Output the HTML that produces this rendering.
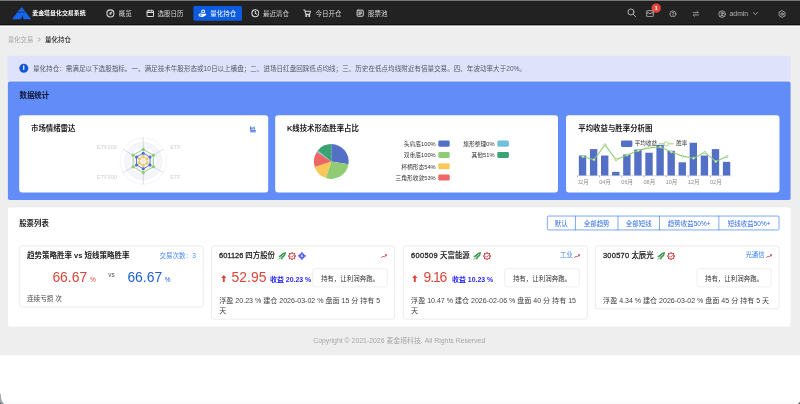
<!DOCTYPE html>
<html lang="zh-CN"><head><meta charset="utf-8"><title>麦金塔量化交易系统</title>
<style>
html,body{margin:0;padding:0;background:#fff;}
body{width:800px;height:404px;overflow:hidden;position:relative;font-family:"Liberation Sans","Noto Sans CJK SC",sans-serif;will-change:transform;}
.t{position:absolute;white-space:nowrap;margin:0;}
.b{position:absolute;display:block;}
</style></head><body>
<svg class="b" style="left:0;top:0" width="800" height="404" viewBox="0 0 800 404"><rect x="0.00" y="0.00" width="800.00" height="404.00" rx="0" fill="#ffffff"/><rect x="0.00" y="0.00" width="800.00" height="355.40" rx="0" fill="#eeeeee"/><rect x="0.00" y="0.00" width="800.00" height="25.60" rx="0" fill="#0b0b0b"/><rect x="0.00" y="0.00" width="800.00" height="24.30" rx="0" fill="#222222"/><rect x="0.00" y="0.00" width="800.00" height="2.00" rx="0" fill="#151515"/><rect x="0.00" y="0.00" width="800.00" height="1.10" rx="0" fill="#777777"/><rect x="0.00" y="25.60" width="800.00" height="1.70" rx="0" fill="#f9f9f9"/><rect x="193.40" y="6.00" width="48.60" height="14.70" rx="1.5" fill="#0d5cdf"/><circle cx="656.2" cy="8.1" r="4.7" fill="#e8443a"/><rect x="7.50" y="55.80" width="783.20" height="24.70" rx="1.8" fill="#dee3fb"/><circle cx="23.800" cy="68.300" r="4.500" fill="#1456d8"/><rect x="7.90" y="81.60" width="782.70" height="118.40" rx="1.8" fill="#628df9"/><rect x="19.20" y="115.30" width="249.00" height="77.10" rx="3" fill="#fff"/><rect x="275.20" y="115.30" width="282.80" height="77.10" rx="3" fill="#fff"/><rect x="566.00" y="115.30" width="213.50" height="77.10" rx="3" fill="#fff"/><rect x="7.90" y="207.50" width="782.70" height="118.90" rx="1.8" fill="#fff"/><rect x="547.35" y="216.05" width="231.70" height="13.90" rx="1.25" fill="#fff" stroke="#4583f5" stroke-width="0.7"/><rect x="574.95" y="215.70" width="0.70" height="14.60" rx="0" fill="#4583f5"/><rect x="617.65" y="215.70" width="0.70" height="14.60" rx="0" fill="#4583f5"/><rect x="659.05" y="215.70" width="0.70" height="14.60" rx="0" fill="#4583f5"/><rect x="718.55" y="215.70" width="0.70" height="14.60" rx="0" fill="#4583f5"/><rect x="19.75" y="245.95" width="183.40" height="61.00" rx="2.25" fill="#fff" stroke="#dfe2e8" stroke-width="0.7"/><rect x="211.55" y="245.95" width="183.10" height="73.20" rx="2.25" fill="#fff" stroke="#dfe2e8" stroke-width="0.7"/><rect x="312.80" y="268.70" width="74.40" height="18.20" rx="2.30" fill="#fff" stroke="#e2e2e2" stroke-width="0.6"/><rect x="403.35" y="245.95" width="183.90" height="73.20" rx="2.25" fill="#fff" stroke="#dfe2e8" stroke-width="0.7"/><rect x="504.80" y="268.70" width="74.40" height="18.20" rx="2.30" fill="#fff" stroke="#e2e2e2" stroke-width="0.6"/><rect x="595.35" y="245.95" width="183.70" height="62.90" rx="2.25" fill="#fff" stroke="#dfe2e8" stroke-width="0.7"/><rect x="697.10" y="268.70" width="73.90" height="18.20" rx="2.30" fill="#fff" stroke="#e2e2e2" stroke-width="0.6"/><path d="M0 393L0.800 394.500Q1 401.500 4.300 404H0Z" fill="#808484" fill-opacity="0.700"/><path d="M0 401.500Q0.200 403.700 1.300 404H0Z" fill="#0e3a3a" fill-opacity="0.900"/><defs><linearGradient id="bg" x1="0" y1="0" x2="0" y2="1"><stop offset="0" stop-color="#000" stop-opacity="0"/><stop offset="1" stop-color="#000" stop-opacity="0.022"/></linearGradient></defs><rect x="0" y="400" width="800" height="4" fill="url(#bg)"/><path d="M800 401.500Q799.600 403.800 797.800 404H800Z" fill="#101010" fill-opacity="0.850"/></svg>
<svg class="b" style="left:0;top:0" width="800" height="26" viewBox="0 0 800 26"><path d="M21.6 7.1 L31.3 19.2 L23.6 19.2 L22.4 15 L21 19.2 L12 19.2 Z" fill="#1766f2"/><path d="M18.4 12.6 Q21.6 11 24.6 12.6" stroke="#222" stroke-width="0.7" fill="none"/></svg>
<div class="t" style="left:32.2px;top:9.04px;font-size:5.95px;line-height:8.33px;color:#ffffff;font-weight:700;">麦金塔量化交易系统</div>
<div class="t" style="left:118.7px;top:8.87px;font-size:6.48px;line-height:9.07px;color:#d9d9d9;font-weight:400;">概览</div>
<svg class="b" style="left:106.40px;top:8.90px" width="8.8" height="8.8" viewBox="0 0 16 16" fill="none" stroke="#d9d9d9" stroke-width="1.900" stroke-linecap="round" stroke-linejoin="round"><circle cx="8" cy="8" r="6.4"/><path d="M8 8 L11 5"/><circle cx="8" cy="8.5" r="1"/></svg>
<div class="t" style="left:157.6px;top:8.87px;font-size:6.48px;line-height:9.07px;color:#d9d9d9;font-weight:400;">选股日历</div>
<svg class="b" style="left:146.00px;top:9.00px" width="8.6" height="8.6" viewBox="0 0 16 16" fill="none" stroke="#d9d9d9" stroke-width="1.900" stroke-linecap="round" stroke-linejoin="round"><rect x="2" y="3.2" width="12" height="10.8" rx="1.5"/><path d="M2 6.5H14M5.3 1.6V4M10.7 1.6V4"/></svg>
<div class="t" style="left:210.3px;top:8.87px;font-size:6.48px;line-height:9.07px;color:#ffffff;font-weight:400;">量化持仓</div>
<svg class="b" style="left:198.30px;top:9.10px" width="8.6" height="8.6" viewBox="0 0 16 16" fill="none" stroke="#fff" stroke-width="1.900" stroke-linecap="round" stroke-linejoin="round"><path d="M2 11c0-2 3-2 5-1.4l3 .8c1.2.4.8 1.8-.4 1.6L7 11.6"/><path d="M9.8 11.2l3.4-1.6c1-.4 1.8.8.8 1.4l-4.6 2.8c-1 .5-2 .4-3-.1L2 12.4"/><circle cx="9.5" cy="4.8" r="2.8"/></svg>
<div class="t" style="left:263.1px;top:8.87px;font-size:6.48px;line-height:9.07px;color:#d9d9d9;font-weight:400;">最近清仓</div>
<svg class="b" style="left:250.80px;top:9.00px" width="8.6" height="8.6" viewBox="0 0 16 16" fill="none" stroke="#d9d9d9" stroke-width="1.900" stroke-linecap="round" stroke-linejoin="round"><circle cx="8" cy="8" r="6.4"/><path d="M8 4.4V8l2.4 1.6"/></svg>
<div class="t" style="left:315.6px;top:8.87px;font-size:6.48px;line-height:9.07px;color:#d9d9d9;font-weight:400;">今日开仓</div>
<svg class="b" style="left:303.20px;top:9.10px" width="8.6" height="8.6" viewBox="0 0 16 16" fill="none" stroke="#d9d9d9" stroke-width="1.900" stroke-linecap="round" stroke-linejoin="round"><path d="M1.4 2h2l1.8 8h7.2l1.4-5.6H5"/><circle cx="6" cy="13" r="1.1"/><circle cx="11.6" cy="13" r="1.1"/></svg>
<div class="t" style="left:368.1px;top:8.87px;font-size:6.48px;line-height:9.07px;color:#d9d9d9;font-weight:400;">股票池</div>
<svg class="b" style="left:356.05px;top:9.20px" width="8.4" height="8.4" viewBox="0 0 16 16" fill="none" stroke="#d9d9d9" stroke-width="1.900" stroke-linecap="round" stroke-linejoin="round"><rect x="2.2" y="2.2" width="11.6" height="11.6" rx="1.5"/><path d="M5.4 5.8h5.2M5.4 8h5.2M5.4 10.2h3"/></svg>
<svg class="b" style="left:627.00px;top:8.30px" width="9.6" height="9.6" viewBox="0 0 16 16" fill="none" stroke="#c2c2c2" stroke-width="1.5" stroke-linecap="round" stroke-linejoin="round"><circle cx="6.600" cy="6.600" r="5"/><path d="M10.600 10.600L14.600 14.600"/></svg>
<svg class="b" style="left:646.4px;top:10px" width="8" height="7.4" viewBox="0 0 8 7.4" fill="none" stroke="#d9d9d9" stroke-width="0.75" stroke-linejoin="round"><rect x="0.7" y="0.7" width="6.6" height="6" rx="0.6"/><path d="M0.9 2.9h1.6l1.5 1 1.5-1h1.6"/></svg>
<div class="t" style="left:556.2px;width:200px;text-align:center;top:4.14px;font-size:5.8px;line-height:8.12px;color:#fff;font-weight:700;">1</div>
<svg class="b" style="left:669.10px;top:9.70px" width="7.8" height="7.8" viewBox="0 0 16 16" fill="none" stroke="#c2c2c2" stroke-width="1.5" stroke-linecap="round" stroke-linejoin="round"><circle cx="8" cy="8" r="6.2"/><path d="M6.2 6.4c0-2.4 3.8-2.4 3.6 0 0 1.2-1.8 1.4-1.8 2.8M8 11.6v.2"/></svg>
<svg class="b" style="left:691.70px;top:9.80px" width="7.6" height="7.6" viewBox="0 0 16 16" fill="none" stroke="#c2c2c2" stroke-width="1.5" stroke-linecap="round" stroke-linejoin="round"><path d="M2.4 5.6h11.2L10.6 2.8M13.6 10.4H2.4l3 2.8"/></svg>
<svg class="b" style="left:717.70px;top:9.50px" width="8.2" height="8.2" viewBox="0 0 16 16" fill="none" stroke="#c2c2c2" stroke-width="1.5" stroke-linecap="round" stroke-linejoin="round"><circle cx="8" cy="8" r="6.4"/><circle cx="8" cy="6.6" r="2.2"/><path d="M3.8 12.6c1.4-3 7-3 8.4 0"/></svg>
<div class="t" style="left:729.6px;top:8.74px;font-size:6.8px;line-height:9.52px;color:#b4b4b4;font-weight:400;">admin</div>
<svg class="b" style="left:752.00px;top:10.20px" width="7" height="7" viewBox="0 0 16 16" fill="none" stroke="#c2c2c2" stroke-width="1.8" stroke-linecap="round" stroke-linejoin="round"><path d="M3.400 6l4.600 4.400 4.600-4.400"/></svg>
<svg class="b" style="left:777.70px;top:9.50px" width="8.2" height="8.2" viewBox="0 0 16 16" fill="none" stroke="#c2c2c2" stroke-width="1.5" stroke-linecap="round" stroke-linejoin="round"><path d="M8 1.4l5.7 3.3v6.6L8 14.6 2.3 11.3V4.7z"/><circle cx="8" cy="8" r="2.4"/></svg>
<div class="t" style="left:8px;top:35.79px;font-size:6.3px;line-height:8.82px;color:#a6a6a6;font-weight:400;">量化交易</div>
<svg class="b" style="left:37.4px;top:37.2px" width="4" height="5" viewBox="0 0 4 5" fill="none" stroke="#9a9a9a" stroke-width="0.9"><path d="M1 0.4L3 2.5L1 4.6"/></svg>
<div class="t" style="left:45px;top:34.86px;font-size:6.48px;line-height:9.07px;color:#2b2b2b;font-weight:500;">量化持仓</div>
<div class="t" style="left:-76.2px;width:200px;text-align:center;top:63.46px;font-size:7.2px;line-height:10.08px;color:#fff;font-weight:700;">i</div>
<div class="t" style="left:33px;top:63.90px;font-size:6.57px;line-height:9.2px;color:#555a66;font-weight:400;">量化持仓：需满足以下选股指标。一、满足技术牛股形态或10日以上横盘；二、进场日红盘回踩低点均线；三、历史在低点均线附近有倍量交易。四、年波动率大于20%。</div>
<div class="t" style="left:19.5px;top:90.52px;font-size:7.41px;line-height:10.37px;color:#0d1430;font-weight:700;">数据统计</div>
<div class="t" style="left:31px;top:124.31px;font-size:7.41px;line-height:10.37px;color:#1a1a1a;font-weight:700;">市场情绪雷达</div>
<div class="t" style="left:286.9px;top:124.31px;font-size:7.41px;line-height:10.37px;color:#1a1a1a;font-weight:700;">K线技术形态胜率占比</div>
<div class="t" style="left:578.3px;top:124.31px;font-size:7.41px;line-height:10.37px;color:#1a1a1a;font-weight:700;">平均收益与胜率分析图</div>
<svg class="b" style="left:250px;top:126.400px" width="6" height="6.400" viewBox="0 0 12 12.800" fill="none" stroke="#2a60dc" stroke-width="1.700"><path d="M1.200 0.500V9.200H11.500M3.400 7V4.600M6.200 7V5.400M9 7V3.200M3 3.200L5.800 4.600 9.400 1.400"/><path d="M0.400 11.700H11.600" stroke-width="1.800"/></svg>
<svg class="b" style="left:0;top:100px" width="280" height="100" viewBox="0 100 280 100"><circle cx="143.25" cy="161.0" r="23.20" fill="#ffffff" stroke="#dfe4f2" stroke-width="0.45"/><circle cx="143.25" cy="161.0" r="18.56" fill="#f3f6fc" stroke="#dfe4f2" stroke-width="0.45"/><circle cx="143.25" cy="161.0" r="13.92" fill="#ffffff" stroke="#dfe4f2" stroke-width="0.45"/><circle cx="143.25" cy="161.0" r="9.28" fill="#f3f6fc" stroke="#dfe4f2" stroke-width="0.45"/><circle cx="143.25" cy="161.0" r="4.64" fill="#ffffff" stroke="#dfe4f2" stroke-width="0.45"/><line x1="143.25" y1="161.0" x2="143.25" y2="137.80" stroke="#b9b9b9" stroke-width="0.5"/><line x1="143.25" y1="161.0" x2="123.16" y2="149.40" stroke="#b9b9b9" stroke-width="0.5"/><line x1="143.25" y1="161.0" x2="123.16" y2="172.60" stroke="#b9b9b9" stroke-width="0.5"/><line x1="143.25" y1="161.0" x2="143.25" y2="184.20" stroke="#b9b9b9" stroke-width="0.5"/><line x1="143.25" y1="161.0" x2="163.34" y2="172.60" stroke="#b9b9b9" stroke-width="0.5"/><line x1="143.25" y1="161.0" x2="163.34" y2="149.40" stroke="#b9b9b9" stroke-width="0.5"/><polygon points="143.25,149.30 133.12,155.15 133.12,166.85 143.25,172.70 153.38,166.85 153.38,155.15" fill="none" stroke="#8fcb72" stroke-width="0.9"/><circle cx="143.25" cy="149.30" r="1.65" fill="#8fcb72"/><circle cx="133.12" cy="155.15" r="1.65" fill="#8fcb72"/><circle cx="133.12" cy="166.85" r="1.65" fill="#8fcb72"/><circle cx="143.25" cy="172.70" r="1.65" fill="#8fcb72"/><circle cx="153.38" cy="166.85" r="1.65" fill="#8fcb72"/><circle cx="153.38" cy="155.15" r="1.65" fill="#8fcb72"/><polygon points="143.25,153.20 136.50,157.10 136.50,164.90 143.25,168.80 150.00,164.90 150.00,157.10" fill="none" stroke="#4a6bd6" stroke-width="0.9"/><circle cx="143.25" cy="153.20" r="1.5" fill="#4a6bd6"/><circle cx="136.50" cy="157.10" r="1.5" fill="#4a6bd6"/><circle cx="136.50" cy="164.90" r="1.5" fill="#4a6bd6"/><circle cx="143.25" cy="168.80" r="1.5" fill="#4a6bd6"/><circle cx="150.00" cy="164.90" r="1.5" fill="#4a6bd6"/><circle cx="150.00" cy="157.10" r="1.5" fill="#4a6bd6"/><polygon points="143.25,156.70 139.53,158.85 139.53,163.15 143.25,165.30 146.97,163.15 146.97,158.85" fill="none" stroke="#fac858" stroke-width="0.9"/><circle cx="143.25" cy="156.70" r="1.65" fill="#fac858"/><circle cx="139.53" cy="158.85" r="1.65" fill="#fac858"/><circle cx="139.53" cy="163.15" r="1.65" fill="#fac858"/><circle cx="143.25" cy="165.30" r="1.65" fill="#fac858"/><circle cx="146.97" cy="163.15" r="1.65" fill="#fac858"/><circle cx="146.97" cy="158.85" r="1.65" fill="#fac858"/><line x1="143.25" y1="161.0" x2="143.25" y2="158.00" stroke="#fff" stroke-width="0.4"/><line x1="143.25" y1="161.0" x2="140.65" y2="159.50" stroke="#fff" stroke-width="0.4"/><line x1="143.25" y1="161.0" x2="140.65" y2="162.50" stroke="#fff" stroke-width="0.4"/><line x1="143.25" y1="161.0" x2="143.25" y2="164.00" stroke="#fff" stroke-width="0.4"/><line x1="143.25" y1="161.0" x2="145.85" y2="162.50" stroke="#fff" stroke-width="0.4"/><line x1="143.25" y1="161.0" x2="145.85" y2="159.50" stroke="#fff" stroke-width="0.4"/></svg>
<div class="t" style="right:683.2px;top:143.51px;font-size:5.56px;line-height:7.78px;color:#cfcfcf;font-weight:400;">ETF200</div>
<div class="t" style="right:683.2px;top:174.21px;font-size:5.56px;line-height:7.78px;color:#cfcfcf;font-weight:400;">ETF300</div>
<div class="t" style="left:170.2px;top:143.51px;font-size:5.56px;line-height:7.78px;color:#cfcfcf;font-weight:400;">ETF</div>
<div class="t" style="left:170.2px;top:174.21px;font-size:5.56px;line-height:7.78px;color:#cfcfcf;font-weight:400;">ETF</div>
<svg class="b" style="left:280px;top:100px" width="280" height="100" viewBox="280 100 280 100"><path d="M331.3 161.5L331.30 144.10A17.4 17.4 0 0 1 348.48 164.28Z" fill="#5470c6"/><path d="M331.3 161.5L348.48 164.28A17.4 17.4 0 0 1 325.84 178.02Z" fill="#91cc75"/><path d="M331.3 161.5L325.84 178.02A17.4 17.4 0 0 1 314.76 166.91Z" fill="#fac858"/><path d="M331.3 161.5L314.76 166.91A17.4 17.4 0 0 1 316.94 151.67Z" fill="#ee6666"/><path d="M331.3 161.5L316.94 151.67A17.4 17.4 0 0 1 317.85 150.46Z" fill="#73c0de"/><path d="M331.3 161.5L317.85 150.46A17.4 17.4 0 0 1 331.30 144.10Z" fill="#3ba272"/><rect x="438.3" y="140.60" width="11.4" height="6.1" rx="1.4" fill="#5470c6"/><rect x="438.3" y="151.90" width="11.4" height="6.1" rx="1.4" fill="#91cc75"/><rect x="438.3" y="163.20" width="11.4" height="6.1" rx="1.4" fill="#fac858"/><rect x="438.3" y="174.50" width="11.4" height="6.1" rx="1.4" fill="#ee6666"/><rect x="497.3" y="140.60" width="11.6" height="6.1" rx="1.4" fill="#73c0de"/><rect x="497.3" y="151.90" width="11.6" height="6.1" rx="1.4" fill="#3ba272"/></svg>
<div class="t" style="right:364.3px;top:140.12px;font-size:5.75px;line-height:8.05px;color:#333;font-weight:400;">头肩底100%</div>
<div class="t" style="right:364.3px;top:151.43px;font-size:5.75px;line-height:8.05px;color:#333;font-weight:400;">双重底100%</div>
<div class="t" style="right:364.3px;top:162.72px;font-size:5.75px;line-height:8.05px;color:#333;font-weight:400;">杯柄形态54%</div>
<div class="t" style="right:364.3px;top:174.03px;font-size:5.75px;line-height:8.05px;color:#333;font-weight:400;">三角形收敛53%</div>
<div class="t" style="right:305.4px;top:140.12px;font-size:5.75px;line-height:8.05px;color:#333;font-weight:400;">旗形整理0%</div>
<div class="t" style="right:305.4px;top:151.43px;font-size:5.75px;line-height:8.05px;color:#333;font-weight:400;">其他51%</div>
<svg class="b" style="left:560px;top:100px" width="230" height="100" viewBox="560 100 230 100"><defs><clipPath id="cb"><rect x="578.2" y="100" width="160" height="100"/></clipPath></defs><rect x="578.84" y="155.50" width="7.39" height="20.19" fill="#5470c6"/><rect x="589.92" y="149.12" width="7.39" height="26.56" fill="#5470c6"/><rect x="601.00" y="155.50" width="7.39" height="20.19" fill="#5470c6"/><rect x="612.08" y="171.86" width="7.39" height="3.82" fill="#5470c6"/><rect x="623.16" y="154.44" width="7.39" height="21.25" fill="#5470c6"/><rect x="634.24" y="149.55" width="7.39" height="26.14" fill="#5470c6"/><rect x="645.32" y="152.74" width="7.39" height="22.95" fill="#5470c6"/><rect x="656.40" y="144.87" width="7.39" height="30.81" fill="#5470c6"/><rect x="667.48" y="150.82" width="7.39" height="24.86" fill="#5470c6"/><rect x="678.56" y="162.30" width="7.39" height="13.39" fill="#5470c6"/><rect x="689.63" y="142.75" width="7.39" height="32.94" fill="#5470c6"/><rect x="700.71" y="155.50" width="7.39" height="20.19" fill="#5470c6"/><rect x="711.79" y="149.12" width="7.39" height="26.56" fill="#5470c6"/><rect x="722.87" y="161.87" width="7.39" height="13.81" fill="#5470c6"/><path d="M577.4 175.69H731.6" stroke="#b8bcc6" stroke-width="0.5"/><path d="M577.40 175.69v1.7" stroke="#70757f" stroke-width="0.55"/><path d="M599.56 175.69v1.7" stroke="#70757f" stroke-width="0.55"/><path d="M621.72 175.69v1.7" stroke="#70757f" stroke-width="0.55"/><path d="M643.88 175.69v1.7" stroke="#70757f" stroke-width="0.55"/><path d="M666.04 175.69v1.7" stroke="#70757f" stroke-width="0.55"/><path d="M688.20 175.69v1.7" stroke="#70757f" stroke-width="0.55"/><path d="M710.36 175.69v1.7" stroke="#70757f" stroke-width="0.55"/><polyline points="582.85,156.56 593.93,159.75 605.01,144.87 616.09,159.75 627.17,155.07 638.25,150.61 649.33,147.64 660.41,147.00 671.49,151.89 682.57,156.14 693.65,158.26 704.73,152.31 715.81,161.45 726.89,156.56" fill="none" stroke="#8ccb6e" stroke-width="1.050"/><circle cx="582.85" cy="156.56" r="1.100" fill="#fff" stroke="#8ccb6e" stroke-width="0.800"/><circle cx="593.93" cy="159.75" r="1.100" fill="#fff" stroke="#8ccb6e" stroke-width="0.800"/><circle cx="605.01" cy="144.87" r="1.100" fill="#fff" stroke="#8ccb6e" stroke-width="0.800"/><circle cx="616.09" cy="159.75" r="1.100" fill="#fff" stroke="#8ccb6e" stroke-width="0.800"/><circle cx="627.17" cy="155.07" r="1.100" fill="#fff" stroke="#8ccb6e" stroke-width="0.800"/><circle cx="638.25" cy="150.61" r="1.100" fill="#fff" stroke="#8ccb6e" stroke-width="0.800"/><circle cx="649.33" cy="147.64" r="1.100" fill="#fff" stroke="#8ccb6e" stroke-width="0.800"/><circle cx="660.41" cy="147.00" r="1.100" fill="#fff" stroke="#8ccb6e" stroke-width="0.800"/><circle cx="671.49" cy="151.89" r="1.100" fill="#fff" stroke="#8ccb6e" stroke-width="0.800"/><circle cx="682.57" cy="156.14" r="1.100" fill="#fff" stroke="#8ccb6e" stroke-width="0.800"/><circle cx="693.65" cy="158.26" r="1.100" fill="#fff" stroke="#8ccb6e" stroke-width="0.800"/><circle cx="704.73" cy="152.31" r="1.100" fill="#fff" stroke="#8ccb6e" stroke-width="0.800"/><circle cx="715.81" cy="161.45" r="1.100" fill="#fff" stroke="#8ccb6e" stroke-width="0.800"/><circle cx="726.89" cy="156.56" r="1.100" fill="#fff" stroke="#8ccb6e" stroke-width="0.800"/><rect x="621" y="140.6" width="11.4" height="6.4" rx="1.4" fill="#5470c6"/><path d="M658.8 143.8H673.7" stroke="#91cc75" stroke-width="0.9"/><circle cx="666.2" cy="143.8" r="2.2" fill="#fff" stroke="#91cc75" stroke-width="0.8"/><g clip-path="url(#cb)" font-size="5.56" fill="#8c8c8c" text-anchor="middle" style="font-family:'Liberation Sans','Noto Sans CJK SC',sans-serif"><text x="582.90" y="184.4">02月</text><text x="605.06" y="184.4">04月</text><text x="627.22" y="184.4">06月</text><text x="649.38" y="184.4">08月</text><text x="671.54" y="184.4">10月</text><text x="693.70" y="184.4">12月</text><text x="715.86" y="184.4">02月</text></g></svg>
<div class="t" style="left:634.8px;top:139.91px;font-size:5.56px;line-height:7.78px;color:#333;font-weight:400;">平均收益</div>
<div class="t" style="left:676.2px;top:139.91px;font-size:5.56px;line-height:7.78px;color:#333;font-weight:400;">胜率</div>
<div class="t" style="left:19.2px;top:219.22px;font-size:7.41px;line-height:10.37px;color:#1a1a1a;font-weight:700;">股票列表</div>
<div class="t" style="left:461.15px;width:200px;text-align:center;top:218.56px;font-size:6.48px;line-height:9.07px;color:#2f6bea;font-weight:400;">默认</div>
<div class="t" style="left:496.65px;width:200px;text-align:center;top:218.56px;font-size:6.48px;line-height:9.07px;color:#2f6bea;font-weight:400;">全部趋势</div>
<div class="t" style="left:538.7px;width:200px;text-align:center;top:218.56px;font-size:6.48px;line-height:9.07px;color:#2f6bea;font-weight:400;">全部短线</div>
<div class="t" style="left:589.15px;width:200px;text-align:center;top:218.56px;font-size:6.48px;line-height:9.07px;color:#2f6bea;font-weight:400;">趋势收益50%+</div>
<div class="t" style="left:649.15px;width:200px;text-align:center;top:218.56px;font-size:6.48px;line-height:9.07px;color:#2f6bea;font-weight:400;">短线收益50%+</div>
<div class="t" style="left:27px;top:251.45px;font-size:7.5px;line-height:10.5px;color:#222;font-weight:700;">趋势策略胜率 vs 短线策略胜率</div>
<div class="t" style="right:604.2px;top:251.01px;font-size:6.55px;line-height:9.17px;color:#4c8bf5;font-weight:400;">交易次数：3</div>
<div class="t" style="left:52.4px;top:267.67px;font-size:13.9px;line-height:19.46px;color:#db4439;font-weight:400;">66.67</div>
<div class="t" style="left:90px;top:275.16px;font-size:6.48px;line-height:9.07px;color:#db4439;font-weight:400;">%</div>
<div class="t" style="left:108.2px;top:269.86px;font-size:6.48px;line-height:9.07px;color:#555;font-weight:400;">vs</div>
<div class="t" style="left:127.4px;top:267.67px;font-size:13.9px;line-height:19.46px;color:#1b5fd9;font-weight:400;">66.67</div>
<div class="t" style="left:164.8px;top:275.16px;font-size:6.48px;line-height:9.07px;color:#1b5fd9;font-weight:400;">%</div>
<div class="t" style="left:27px;top:293.68px;font-size:6.6px;line-height:9.24px;color:#444;font-weight:400;">连续亏损 次</div>
<div class="t" style="left:219.1px;top:251.42px;font-size:7.41px;line-height:10.37px;color:#222;font-weight:500;-webkit-text-stroke:0.12px #222;"><span style="-webkit-text-stroke:0.28px #222">601126</span> 四方股份</div>
<svg class="b" style="left:278.20000000000005px;top:252.00px" width="8.2" height="8.2" viewBox="0 0 16 16" fill="none" stroke="#2f9640" stroke-width="1.4" stroke-linecap="round" stroke-linejoin="round"><path d="M14.6 1.4C10 1.400 6.400 4 4.600 8L8 11.400C12 9.600 14.600 6 14.600 1.400Z" fill="#2f9640"/><path d="M5.200 7.200L1.600 8.400 4 10.400M8.800 10.800L7.600 14.400 5.600 12" fill="#2f9640"/><path d="M4 12L1.600 14.400" /><path d="M7 9L11.400 4.600" stroke="#fff" stroke-width="1.500"/></svg>
<svg class="b" style="left:288.1px;top:252.10px" width="8.2" height="8.2" viewBox="0 0 16 16" fill="none" stroke="#cf4a50" stroke-width="1.7" stroke-linecap="round" stroke-linejoin="round"><circle cx="8" cy="8" r="6"/><path d="M5.200 8.200l2 2 3.800-4"/><path d="M8 .8v1.400M8 13.800v1.400M.8 8h1.400M13.800 8h1.400M2.900 2.900l1 1M12.100 12.100l1 1M2.900 13.100l1-1M12.100 3.900l1-1" stroke-width="2.200"/></svg>
<svg class="b" style="left:297.8px;top:252.30px" width="7.8" height="7.8" viewBox="0 0 16 16" fill="none" stroke="#4545ff" stroke-width="2.2" stroke-linecap="round" stroke-linejoin="round"><circle cx="8" cy="8" r="4.400"/><path d="M8 .8v5M8 10.200v5M.8 8h5M10.200 8h5"/></svg>
<svg class="b" style="left:381.4px;top:253.30px" width="6.4" height="6.4" viewBox="0 0 16 16" fill="none" stroke="#d63a44" stroke-width="2.2" stroke-linecap="round" stroke-linejoin="round"><path d="M1.500 11.500l4-4 2.500 2.500 5-5M10.500 4.500h3v3"/></svg>
<svg class="b" style="left:220.6px;top:274.6px" width="5.600" height="7" viewBox="0 0 10 13.200"><path d="M5 0L10 5.800H6.800V13.200H3.200V5.800H0Z" fill="#db4439"/></svg>
<div class="t" style="left:231.6px;top:267.67px;font-size:13.9px;line-height:19.46px;color:#db4439;font-weight:400;">52.95</div>
<div class="t" style="left:270px;top:275.14px;font-size:6.94px;line-height:9.72px;color:#1f1fff;font-weight:700;">收益 20.23 %</div>
<div class="t" style="left:250.0px;width:200px;text-align:center;top:273.96px;font-size:6.48px;line-height:9.07px;color:#333;font-weight:400;">持有，让利润奔跑。</div>
<div class="t" style="left:219.29999999999998px;top:295.87px;font-size:7.05px;line-height:9.87px;color:#444;font-weight:400;">浮盈 20.23 % 建仓 2026-03-02 % 盘面 15 分 持有 5</div>
<div class="t" style="left:219.29999999999998px;top:305.87px;font-size:7.05px;line-height:9.87px;color:#444;font-weight:400;">天</div>
<div class="t" style="left:410.9px;top:251.42px;font-size:7.41px;line-height:10.37px;color:#222;font-weight:500;-webkit-text-stroke:0.12px #222;"><span style="letter-spacing:0.400px;-webkit-text-stroke:0.28px #222">600509</span> 天富能源</div>
<svg class="b" style="left:472.8px;top:252.00px" width="8.2" height="8.2" viewBox="0 0 16 16" fill="none" stroke="#2f9640" stroke-width="1.4" stroke-linecap="round" stroke-linejoin="round"><path d="M14.6 1.4C10 1.400 6.400 4 4.600 8L8 11.400C12 9.600 14.600 6 14.600 1.400Z" fill="#2f9640"/><path d="M5.200 7.200L1.600 8.400 4 10.400M8.800 10.800L7.600 14.400 5.600 12" fill="#2f9640"/><path d="M4 12L1.600 14.400" /><path d="M7 9L11.400 4.600" stroke="#fff" stroke-width="1.500"/></svg>
<svg class="b" style="left:482.7px;top:252.10px" width="8.2" height="8.2" viewBox="0 0 16 16" fill="none" stroke="#cf4a50" stroke-width="1.7" stroke-linecap="round" stroke-linejoin="round"><circle cx="8" cy="8" r="6"/><path d="M5.200 8.200l2 2 3.800-4"/><path d="M8 .8v1.400M8 13.800v1.400M.8 8h1.400M13.800 8h1.400M2.900 2.900l1 1M12.100 12.100l1 1M2.900 13.100l1-1M12.100 3.900l1-1" stroke-width="2.200"/></svg>
<svg class="b" style="left:574.0px;top:253.30px" width="6.4" height="6.4" viewBox="0 0 16 16" fill="none" stroke="#d63a44" stroke-width="2.2" stroke-linecap="round" stroke-linejoin="round"><path d="M1.500 11.500l4-4 2.500 2.500 5-5M10.500 4.500h3v3"/></svg>
<div class="t" style="right:227.19999999999993px;top:251.22px;font-size:6.4px;line-height:8.96px;color:#3b82f6;font-weight:400;">工业</div>
<svg class="b" style="left:412.20000000000005px;top:274.6px" width="5.600" height="7" viewBox="0 0 10 13.200"><path d="M5 0L10 5.800H6.800V13.200H3.200V5.800H0Z" fill="#db4439"/></svg>
<div class="t" style="left:423.6px;top:267.67px;font-size:13.9px;line-height:19.46px;color:#db4439;font-weight:400;letter-spacing:-1.15px;">9.16</div>
<div class="t" style="left:452px;top:275.14px;font-size:6.94px;line-height:9.72px;color:#1f1fff;font-weight:700;">收益 10.23 %</div>
<div class="t" style="left:442.0px;width:200px;text-align:center;top:273.96px;font-size:6.48px;line-height:9.07px;color:#333;font-weight:400;">持有，让利润奔跑。</div>
<div class="t" style="left:411.1px;top:295.87px;font-size:7.05px;line-height:9.87px;color:#444;font-weight:400;">浮盈 10.47 % 建仓 2026-02-06 % 盘面 40 分 持有 15</div>
<div class="t" style="left:411.1px;top:305.87px;font-size:7.05px;line-height:9.87px;color:#444;font-weight:400;">天</div>
<div class="t" style="left:602.9px;top:251.42px;font-size:7.41px;line-height:10.37px;color:#222;font-weight:500;-webkit-text-stroke:0.12px #222;"><span style="letter-spacing:0.300px;-webkit-text-stroke:0.28px #222">300570</span> 太辰光</div>
<svg class="b" style="left:656.9px;top:252.00px" width="8.2" height="8.2" viewBox="0 0 16 16" fill="none" stroke="#2f9640" stroke-width="1.4" stroke-linecap="round" stroke-linejoin="round"><path d="M14.6 1.4C10 1.400 6.400 4 4.600 8L8 11.400C12 9.600 14.600 6 14.600 1.400Z" fill="#2f9640"/><path d="M5.200 7.200L1.600 8.400 4 10.400M8.800 10.800L7.600 14.400 5.600 12" fill="#2f9640"/><path d="M4 12L1.600 14.400" /><path d="M7 9L11.400 4.600" stroke="#fff" stroke-width="1.500"/></svg>
<svg class="b" style="left:666.8px;top:252.10px" width="8.2" height="8.2" viewBox="0 0 16 16" fill="none" stroke="#cf4a50" stroke-width="1.7" stroke-linecap="round" stroke-linejoin="round"><circle cx="8" cy="8" r="6"/><path d="M5.200 8.200l2 2 3.800-4"/><path d="M8 .8v1.400M8 13.800v1.400M.8 8h1.400M13.800 8h1.400M2.900 2.900l1 1M12.100 12.100l1 1M2.900 13.100l1-1M12.100 3.900l1-1" stroke-width="2.200"/></svg>
<svg class="b" style="left:765.8px;top:253.30px" width="6.4" height="6.4" viewBox="0 0 16 16" fill="none" stroke="#d63a44" stroke-width="2.2" stroke-linecap="round" stroke-linejoin="round"><path d="M1.500 11.500l4-4 2.500 2.500 5-5M10.500 4.500h3v3"/></svg>
<div class="t" style="right:35.39999999999998px;top:251.22px;font-size:6.4px;line-height:8.96px;color:#3b82f6;font-weight:400;">光通信</div>
<div class="t" style="left:634.05px;width:200px;text-align:center;top:273.96px;font-size:6.48px;line-height:9.07px;color:#333;font-weight:400;">持有，让利润奔跑。</div>
<div class="t" style="left:603.1px;top:295.87px;font-size:7.05px;line-height:9.87px;color:#444;font-weight:400;">浮盈 4.34 % 建仓 2026-03-02 % 盘面 45 分 持有 5 天</div>
<div class="t" style="left:299.2px;width:200px;text-align:center;top:335.67px;font-size:6.9px;line-height:9.66px;color:#a6a6a6;font-weight:400;">Copyright © 2021-2026 麦金塔科技. All Rights Reserved</div>
</body></html>
